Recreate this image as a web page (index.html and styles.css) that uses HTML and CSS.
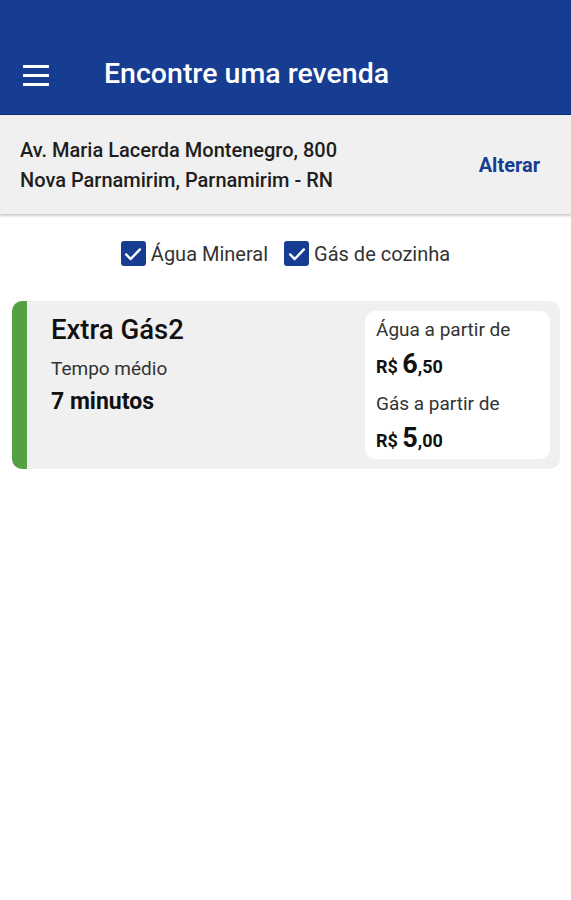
FILE: index.html
```html
<!DOCTYPE html>
<html lang="pt-BR">
<head>
    <meta charset="UTF-8">
    <meta name="viewport" content="width=device-width, initial-scale=1.0">
    <title>Encontre uma revenda</title>
    <link rel="stylesheet" href="styles.css">
</head>
<body>
    <header class="topbar">
        <button class="menu-btn" aria-label="Menu">
            <span></span><span></span><span></span>
        </button>
        <h1 class="title">Encontre uma revenda</h1>
    </header>

    <section class="address">
        <div class="address-text">
            <div>Av. Maria Lacerda Montenegro, 800</div>
            <div>Nova Parnamirim, Parnamirim - RN</div>
        </div>
        <a class="change" href="#">Alterar</a>
    </section>

    <div class="filters">
        <label class="check">
            <span class="box">
                <svg viewBox="0 0 24 24" width="22" height="22"><path d="M4.5 12.5l5 5L19.5 7" fill="none" stroke="#fff" stroke-width="2.6" stroke-linecap="round" stroke-linejoin="round"/></svg>
            </span>
            Água Mineral
        </label>
        <label class="check">
            <span class="box">
                <svg viewBox="0 0 24 24" width="22" height="22"><path d="M4.5 12.5l5 5L19.5 7" fill="none" stroke="#fff" stroke-width="2.6" stroke-linecap="round" stroke-linejoin="round"/></svg>
            </span>
            Gás de cozinha
        </label>
    </div>

    <div class="store">
        <div class="store-info">
            <div class="store-name">Extra Gás2</div>
            <div class="store-label">Tempo médio</div>
            <div class="store-time">7 minutos</div>
        </div>
        <div class="prices">
            <div class="price-label">Água a partir de</div>
            <div class="price"><span class="cur">R$</span> <span class="big">6</span>,50</div>
            <div class="price-label">Gás a partir de</div>
            <div class="price"><span class="cur">R$</span> <span class="big">5</span>,00</div>
        </div>
    </div>
</body>
</html>
```

FILE: styles.css
```css
body {
    margin: 0;
    font-family: Roboto, "Liberation Sans", sans-serif;
    background-color: #fff;
    color: #1e1e1e;
}
.topbar {
    background-color: #163d92;
    height: 115px;
    display: flex;
    align-items: flex-end;
    padding: 0 0 24px 0;
    box-sizing: border-box;
    border-bottom: 1px solid #0f2e78;
}
.menu-btn {
    background: none;
    border: none;
    padding: 0;
    margin: 0 0 4px 23px;
    width: 26px;
    display: flex;
    flex-direction: column;
    gap: 6px;
    cursor: pointer;
}
.menu-btn span {
    display: block;
    height: 3px;
    background-color: #fff;
}
.title {
    margin: 0 0 0 55px;
    color: #fff;
    font-size: 28.5px;
    font-weight: 500;
    line-height: 32px;
}
.address {
    background-color: #f0f0f0;
    height: 99px;
    display: flex;
    align-items: center;
    justify-content: space-between;
    padding: 0 31px 0 20px;
    box-shadow: 0 2px 2px rgba(0, 0, 0, 0.2);
}
.address-text {
    font-size: 20px;
    font-weight: 500;
    line-height: 30px;
    color: #1e1e1e;
}
.change {
    color: #163d92;
    font-weight: 700;
    font-size: 20px;
    text-decoration: none;
}
.filters {
    display: flex;
    justify-content: center;
    gap: 16px;
    margin-top: 27px;
    font-size: 20px;
    color: #333;
}
.check {
    display: flex;
    align-items: center;
    gap: 5px;
}
.box {
    width: 25px;
    height: 25px;
    background-color: #163d92;
    border-radius: 3px;
    display: flex;
    align-items: center;
    justify-content: center;
}
.store {
    margin: 35px 11px 0 12px;
    background-color: #f0f0f0;
    border-left: 15px solid #55a043;
    border-radius: 10px;
    display: flex;
    justify-content: space-between;
    padding: 10px 10px 10px 24px;
}
.store-info {
    padding-top: 4px;
}
.store-name {
    font-size: 27.5px;
    font-weight: 500;
    line-height: 30px;
    color: #111;
}
.store-label {
    font-size: 19px;
    line-height: 24px;
    margin-top: 12px;
    color: #333;
}
.store-time {
    font-size: 23px;
    font-weight: 700;
    line-height: 26px;
    margin-top: 8px;
    color: #111;
}
.prices {
    background-color: #fff;
    border-radius: 10px;
    width: 185px;
    box-sizing: border-box;
    padding: 0 11px;
}
.price-label {
    font-size: 19px;
    line-height: 37px;
    color: #333;
}
.price {
    font-size: 18px;
    font-weight: 700;
    line-height: 37px;
    height: 37px;
    color: #111;
}
.price .big {
    font-size: 27px;
    line-height: 1;
}
```
